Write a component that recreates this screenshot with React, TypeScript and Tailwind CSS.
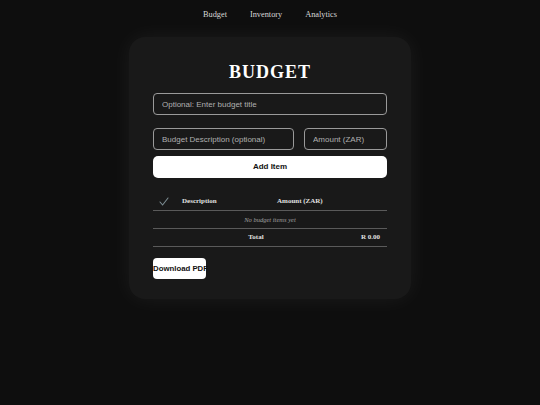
export default function App() {
  return (
    <div className="min-h-[405px] w-full bg-[#0e0e0e] pb-10" style={{ fontFamily: '"Liberation Serif", serif' }}>
      {/* Nav */}
      <nav className="flex h-[31px] items-center justify-center gap-[23px] text-[8.3px] text-[#d8d8d8]">
        <span>Budget</span>
        <span>Inventory</span>
        <span>Analytics</span>
      </nav>

      {/* Card */}
      <div className="mx-auto mt-[6px] w-[282px] rounded-[16px] bg-[#191919] px-[24px] pt-[24px] pb-[20px] shadow-[0_0_22px_rgba(255,255,255,0.06)]">
        <h1 className="text-center text-[18px] leading-[22px] font-bold tracking-[1px] text-white">BUDGET</h1>

        <div className="mt-[10px] flex flex-col" style={{ fontFamily: '"Liberation Sans", Arial, sans-serif' }}>
          <input
            className="h-[22px] w-full rounded-[4px] border border-[#9a9a9a] bg-transparent px-[8px] text-[8px] text-white outline-none placeholder:text-[#b0b0b0]"
            placeholder="Optional: Enter budget title"
          />
          <div className="mt-[13px] flex gap-[10px]">
            <input
              className="h-[22px] w-[141px] rounded-[4px] border border-[#9a9a9a] bg-transparent px-[8px] text-[8px] text-white outline-none placeholder:text-[#b0b0b0]"
              placeholder="Budget Description (optional)"
            />
            <input
              className="h-[22px] min-w-0 flex-1 rounded-[4px] border border-[#9a9a9a] bg-transparent px-[8px] text-[8px] text-white outline-none placeholder:text-[#b0b0b0]"
              placeholder="Amount (ZAR)"
            />
          </div>
          <button className="mt-[6px] h-[22px] w-full rounded-[5px] bg-white text-[8px] font-bold text-[#111]">Add Item</button>
        </div>

        {/* Table */}
        <div className="mt-[14px] text-[7px] text-[#e0e0e0]">
          <div className="grid h-[19px] grid-cols-[22px_95px_1fr] items-center border-b-[1.5px] border-[#5a5a5a]">
            <div className="flex justify-center">
              <svg width="10" height="9" viewBox="0 0 10 9" fill="none" stroke="#7c8d93" strokeWidth="1.1" strokeLinecap="round">
                <path d="M1 5 L3.6 8 L9 1" />
              </svg>
            </div>
            <div className="pl-[7px] font-bold">Description</div>
            <div className="pl-[7px] font-bold">Amount (ZAR)</div>
          </div>
          <div className="flex h-[18px] items-center justify-center border-b-[1.5px] border-[#5a5a5a] text-[6.5px] italic text-[#a0a0a0]">
            No budget items yet
          </div>
          <div className="grid h-[18px] grid-cols-[206px_1fr] items-center border-b-[1.5px] border-[#5a5a5a] font-bold">
            <div className="text-center">Total</div>
            <div className="pr-[7px] text-right whitespace-nowrap">R 0.00</div>
          </div>
        </div>

        <button
          className="mt-[11px] flex h-[21px] w-[53px] items-center justify-start overflow-visible rounded-[4px] bg-white px-0 text-[7.8px] font-bold whitespace-nowrap text-[#111]"
          style={{ fontFamily: '"Liberation Sans", Arial, sans-serif' }}
        >
          Download PDF
        </button>
      </div>
    </div>
  )
}
